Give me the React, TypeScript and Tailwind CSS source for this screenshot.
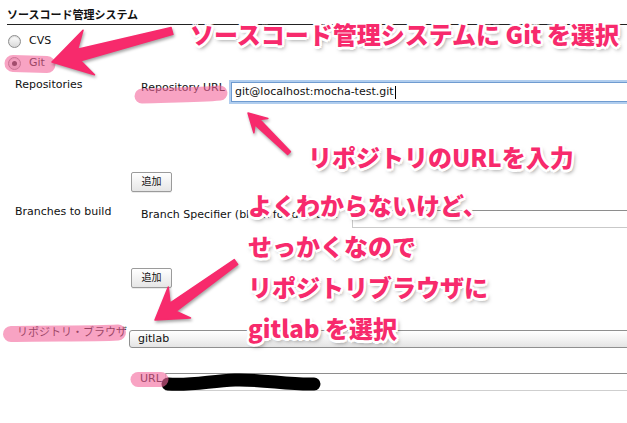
import React from "react";

type Pt = [number, number];

const PINK = "#f72a6c";

// arrow polygon from tail t to tip p, with barbed head
function arrowPoints(t: Pt, p: Pt, headLen: number, headHalf: number, neck: number, shaftHead: number, shaftTail: number) {
  const dx = p[0] - t[0];
  const dy = p[1] - t[1];
  const len = Math.hypot(dx, dy);
  const ux = dx / len;
  const uy = dy / len;
  const nx = -uy;
  const ny = ux;
  const at = (d: number, w: number): Pt => [p[0] - ux * d + nx * w, p[1] - uy * d + ny * w];
  const pts: Pt[] = [
    at(len, shaftTail),
    at(neck, shaftHead),
    at(headLen, headHalf),
    p,
    at(headLen, -headHalf),
    at(neck, -shaftHead),
    at(len, -shaftTail),
  ];
  return pts.map(([x, y]) => `${x.toFixed(1)},${y.toFixed(1)}`).join(" ");
}

function Radio({ checked = false }: { checked?: boolean }) {
  return (
    <span className="flex h-[13px] w-[13px] shrink-0 items-center justify-center rounded-full border border-[#8d8d8d] bg-gradient-to-b from-white to-[#d9d9d9] shadow-[inset_0_1px_1px_rgba(0,0,0,0.15)]">
      {checked && <span className="h-[5px] w-[5px] rounded-full bg-[#2a2a2a]" />}
    </span>
  );
}

function AddButton() {
  return (
    <div className="flex h-[20px] w-[41px] items-center justify-center rounded-[2px] border border-[#9b9b9b] bg-gradient-to-b from-white to-[#e6e6e6] text-[10px] shadow-[0_1px_0_rgba(0,0,0,0.08)]">
      追加
    </div>
  );
}

export default function App() {
  return (
    <div className="relative h-[423px] w-[627px] overflow-hidden bg-white font-['DejaVu_Sans','Noto_Sans_CJK_JP',sans-serif] text-[11px] leading-[14px] text-[#111]">
      {/* section title */}
      <div className="ml-[7px] mt-[9px] border-b border-[#222] pb-[1px] font-bold">ソースコード管理システム</div>

      {/* radios */}
      <div className="mt-[5px] flex h-[22px] items-center gap-[8px] pl-[8px]">
        <Radio />
        CVS
      </div>
      <div className="flex h-[22px] items-center gap-[8px] pl-[8px]">
        <Radio checked />
        Git
      </div>

      {/* repositories */}
      <div className="mt-[4px] flex items-start">
        <div className="w-[131px] shrink-0 pl-[15px]">Repositories</div>
        <div className="w-[100px] shrink-0 pl-[10px] pt-[3px] whitespace-nowrap">Repository URL</div>
        <div className="mt-[4px] flex h-[20px] w-[420px] shrink-0 items-center border border-[#6f9bd0] bg-white pl-[3px] shadow-[0_0_0_2px_#b0cdee]">
          git@localhost:mocha-test.git
          <span className="ml-[1px] h-[13px] w-px bg-black" />
        </div>
      </div>
      <div className="mt-[70px] pl-[131px]">
        <AddButton />
      </div>

      {/* branches */}
      <div className="mt-[13px] flex items-start">
        <div className="w-[131px] shrink-0 pl-[15px]">Branches to build</div>
        <div className="w-[221px] shrink-0 pl-[10px] pt-[3px] whitespace-nowrap">Branch Specifier (blank for default):</div>
        <div className="mt-[5px] h-[18px] w-[300px] shrink-0 border border-[#c9c9c9] border-t-[#8e8e8e] bg-white" />
      </div>
      <div className="mt-[40px] pl-[131px]">
        <AddButton />
      </div>

      {/* repository browser */}
      <div className="mt-[38px] flex items-start">
        <div className="w-[129px] shrink-0 pl-[17px] whitespace-nowrap">リポジトリ・ブラウザ</div>
        <div className="mt-[4px] flex h-[18px] w-[520px] shrink-0 items-center rounded-[3px] border border-[#8f8f8f] bg-gradient-to-b from-white via-[#f3f3f3] to-[#e4e4e4] pl-[8px]">
          gitlab
        </div>
      </div>

      {/* url */}
      <div className="mt-[24px] flex items-start pl-[140px]">
        <div className="w-[25px] shrink-0">URL</div>
        <div className="mt-[1px] h-[18px] w-[480px] shrink-0 border border-[#cfcfcf] border-t-[#8e8e8e] bg-white" />
      </div>

      {/* marker, highlighter and arrows drawn over the form */}
      <svg className="pointer-events-none absolute left-0 top-0" width={627} height={423}>
        <path d="M168 384 C 190 386, 210 381, 235 380 S 290 385, 314 384" stroke="#000" strokeWidth={13} strokeLinecap="round" fill="none" />
        <path d="M232 379 C 245 376, 262 377, 272 381" stroke="#000" strokeWidth={6} strokeLinecap="round" fill="none" />
        <g fill="none" stroke="#f4669b" strokeOpacity={0.6} strokeLinecap="round">
          <path d="M13 63.5 L47 64.5" strokeWidth={17} />
          <path d="M142 96 C 170 95, 200 95, 220 93" strokeWidth={15} />
          <path d="M11 334 C 50 333, 90 334, 118 332.5" strokeWidth={16} />
          <path d="M138 379.5 L161 379.5" strokeWidth={15} />
        </g>
        <g fill={PINK} stroke={PINK} strokeWidth={1.5} strokeLinejoin="round" className="[filter:drop-shadow(1px_2px_1.5px_rgba(0,0,0,0.35))]">
          <polygon points={arrowPoints([172, 31], [52, 62], 38, 23, 28, 6, 3.5)} />
          <polygon points={arrowPoints([289, 153], [248, 113], 18, 10, 13, 3.5, 2)} />
          <polygon points={arrowPoints([236, 262], [155, 320], 30, 19, 22, 5, 3)} />
        </g>
      </svg>

      {/* annotations */}
      <div className="absolute left-[190px] top-[22px] whitespace-nowrap font-['Noto_Sans_CJK_JP',sans-serif] text-[24px] font-black leading-[24px] text-[#f72a6c] [text-shadow:0_0_1px_#fff,2px_2px_0_#fff,-2px_-2px_0_#fff,2px_-2px_0_#fff,-2px_2px_0_#fff,2.5px_0_0_#fff,-2.5px_0_0_#fff,0_2.5px_0_#fff,0_-2.5px_0_#fff,2px_3px_4px_rgba(0,0,0,0.5)]">
        ソースコード管理システムに Git を選択
      </div>
      <div className="absolute left-[308px] top-[145px] whitespace-nowrap font-['Noto_Sans_CJK_JP',sans-serif] text-[24px] font-black leading-[24px] text-[#f72a6c] [text-shadow:0_0_1px_#fff,2px_2px_0_#fff,-2px_-2px_0_#fff,2px_-2px_0_#fff,-2px_2px_0_#fff,2.5px_0_0_#fff,-2.5px_0_0_#fff,0_2.5px_0_#fff,0_-2.5px_0_#fff,2px_3px_4px_rgba(0,0,0,0.5)]">
        リポジトリのURLを入力
      </div>
      <div className="absolute left-[248px] top-[184px] whitespace-nowrap font-['Noto_Sans_CJK_JP',sans-serif] text-[24px] font-black leading-[41px] text-[#f72a6c] [text-shadow:0_0_1px_#fff,2px_2px_0_#fff,-2px_-2px_0_#fff,2px_-2px_0_#fff,-2px_2px_0_#fff,2.5px_0_0_#fff,-2.5px_0_0_#fff,0_2.5px_0_#fff,0_-2.5px_0_#fff,2px_3px_4px_rgba(0,0,0,0.5)]">
        <div>よくわからないけど、</div>
        <div>せっかくなので</div>
        <div>リポジトリブラウザに</div>
        <div>gitlab を選択</div>
      </div>
    </div>
  );
}
